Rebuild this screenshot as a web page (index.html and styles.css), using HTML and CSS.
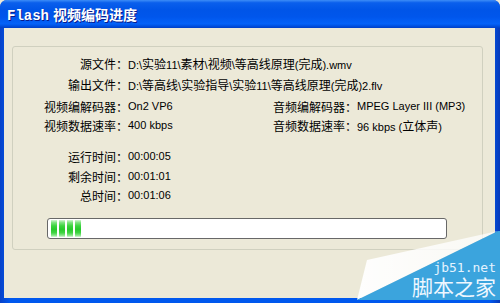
FILE: index.html
```html
<!DOCTYPE html>
<html lang="zh-CN">
<head>
<meta charset="UTF-8">
<title>Flash 视频编码进度</title>
<link rel="stylesheet" href="styles.css">
</head>
<body>
<div class="window">
    <div class="titlebar"><span class="tt-en">Flash</span> <span class="tt-zh">视频编码进度</span></div>
    <div class="client">
        <div class="group">
            <div class="grid">
                <div class="lbl">源文件：</div>
                <div class="val wide">D:\<span class="zh">实验</span>11\<span class="zh">素材</span>\<span class="zh">视频</span>\<span class="zh">等高线原理</span>(<span class="zh">完成</span>).wmv</div>

                <div class="lbl">输出文件：</div>
                <div class="val wide">D:\<span class="zh">等高线</span>\<span class="zh">实验指导</span>\<span class="zh">实验</span>11\<span class="zh">等高线原理</span>(<span class="zh">完成</span>)2.flv</div>

                <div class="lbl">视频编解码器：</div>
                <div class="val">On2 VP6</div>
                <div class="lbl">音频编解码器：</div>
                <div class="val">MPEG Layer III (MP3)</div>

                <div class="lbl">视频数据速率：</div>
                <div class="val">400 kbps</div>
                <div class="lbl">音频数据速率：</div>
                <div class="val">96 kbps (<span class="zh">立体声</span>)</div>

                <div class="lbl gap">运行时间：</div>
                <div class="val gap">00:00:05</div>
                <div class="lbl row-start">剩余时间：</div>
                <div class="val">00:01:01</div>
                <div class="lbl row-start">总时间：</div>
                <div class="val">00:01:06</div>
            </div>

            <div class="progress">
                <span class="chunk"></span>
                <span class="chunk"></span>
                <span class="chunk"></span>
                <span class="chunk"></span>
            </div>
        </div>
    </div>

    <!-- site watermark in the corner -->
    <svg class="wm" width="150" height="75" viewBox="0 0 150 75">
        <defs>
            <linearGradient id="fold" x1="0" y1="0" x2="1" y2="0">
                <stop offset="0" stop-color="#ffffff" stop-opacity="0.95"/>
                <stop offset="1" stop-color="#ffffff" stop-opacity="0.7"/>
            </linearGradient>
        </defs>
        <polygon points="17,32 148,3 7,72" fill="url(#fold)"/>
        <polygon points="148,3 150,3 150,72 7,72" fill="#3ba4dd"/>
        <text x="146" y="44" text-anchor="end" class="wm-url">jb51.net</text>
        <text x="146" y="67" text-anchor="end" class="wm-name">脚本之家</text>
    </svg>
</div>
</body>
</html>
```

FILE: styles.css
```css
body {
    margin: 0;
    padding: 0;
    background: #ece9d8;
}

.window {
    position: relative;
    width: 500px;
    height: 303px;
    display: flex;
    flex-direction: column;
    background: linear-gradient(to right, #0842c9, #0058ee 2%, #0058ee 98%, #0639b8);
    border-radius: 7px 7px 0 0;
    overflow: hidden;
}

.titlebar {
    height: 28px;
    flex: none;
    box-sizing: border-box;
    padding: 6px 0 0 7px;
    background: linear-gradient(to bottom, #3d8df7 0%, #0a5fec 10%, #0055e8 35%, #0056ec 60%, #0462f8 85%, #0050e0 93%, #003fc6 100%);
    color: #fff;
    font-weight: bold;
    text-shadow: 1px 1px 0 #0a1a8a;
    white-space: nowrap;
    line-height: 16px;
}
.tt-en {
    font-family: "Liberation Mono", "DejaVu Sans Mono", monospace;
    font-size: 14px;
}
.tt-zh {
    font-family: "Noto Sans CJK SC", sans-serif;
    font-size: 14px;
}

.client {
    flex: 1;
    margin: 0 5px 5px 4px;
    background: #ece9d8;
    padding: 18px 12px 0 8px;
}

.group {
    box-sizing: border-box;
    height: 204px;
    border: 1px solid #d0d0bf;
    border-radius: 3px;
    padding-top: 7px;
    font-family: "Noto Sans CJK SC", sans-serif;
    font-size: 12px;
    color: #000;
}

.grid {
    display: grid;
    grid-template-columns: 115px 145px 84px 1fr;
    line-height: 19.4px;
}
.lbl {
    text-align: right;
    white-space: nowrap;
}
.row-start { grid-column: 1; }
.val {
    font-family: "Liberation Sans", "Noto Sans CJK SC", sans-serif;
    font-size: 11px;
    white-space: nowrap;
}
.val.wide { grid-column: 2 / 5; }
.zh {
    font-family: "Noto Sans CJK SC", sans-serif;
    font-size: 12px;
}
.gap { margin-top: 9.7px; grid-column: 1; }
.val.gap { grid-column: 2; }

.progress {
    box-sizing: border-box;
    width: 400px;
    height: 21px;
    margin: 12px 0 0 34px;
    border: 1px solid #686868;
    border-radius: 3px;
    background: #fff;
    padding: 1px 3px;
    display: flex;
    gap: 2px;
}
.chunk {
    width: 6px;
    height: 100%;
    background: linear-gradient(to bottom, #d2f6d2 0%, #7ee37f 15%, #3bd43e 35%, #28c92b 55%, #3fd442 75%, #86e587 90%, #d8f7d8 100%);
}

.wm {
    position: absolute;
    left: 350px;
    top: 228px;
}
.wm-url {
    font-family: "DejaVu Sans Mono", monospace;
    font-size: 13px;
    fill: #e4f3ff;
}
.wm-name {
    font-family: "Noto Sans CJK SC", sans-serif;
    font-size: 21px;
    fill: #eef7ff;
}
```
